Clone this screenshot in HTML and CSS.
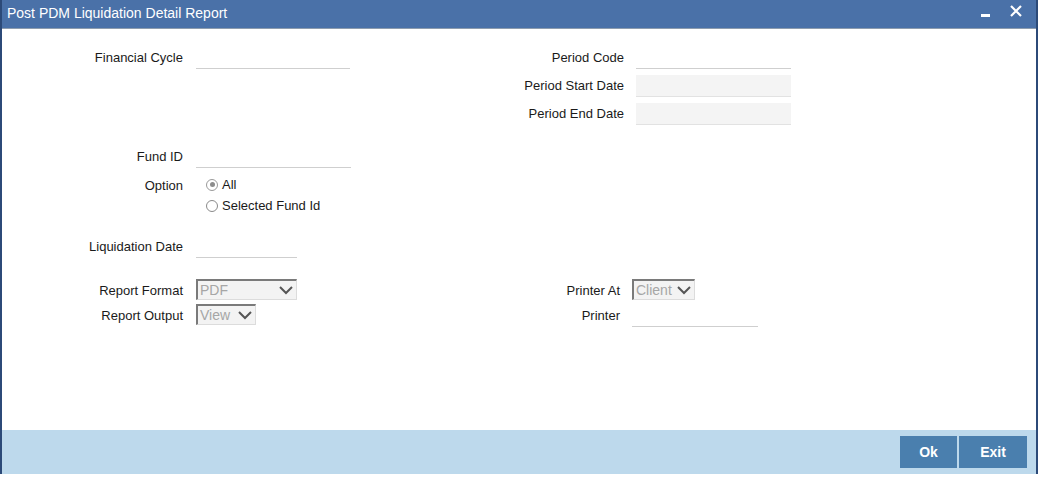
FILE: index.html
```html
<!DOCTYPE html>
<html>
<head>
<meta charset="utf-8">
<title>Post PDM Liquidation Detail Report</title>
<link rel="stylesheet" href="styles.css">
</head>
<body>
<div class="window">
  <div class="titlebar">
    <span class="title">Post PDM Liquidation Detail Report</span>
    <div class="win-ctrls">
      <span class="minimize"></span>
      <svg class="close" width="12" height="12" viewBox="0 0 12 12"><path d="M1 1 L11 11 M11 1 L1 11" stroke="#fff" stroke-width="2.2" fill="none"/></svg>
    </div>
  </div>
  <div class="content">
    <div class="section top">
      <div class="col-left">
        <div class="row"><label class="lbl">Financial Cycle</label><div class="field line w155"></div></div>
      </div>
      <div class="col-right">
        <div class="row"><label class="lbl rlbl">Period Code</label><div class="field line w155"></div></div>
        <div class="row"><label class="lbl rlbl">Period Start Date</label><div class="field filled w155"></div></div>
        <div class="row"><label class="lbl rlbl">Period End Date</label><div class="field filled w155"></div></div>
      </div>
    </div>

    <div class="section mid">
      <div class="row"><label class="lbl">Fund ID</label><div class="field line w155"></div></div>
      <div class="row option-row">
        <label class="lbl">Option</label>
        <div class="radios">
          <div class="radio-item"><span class="radio checked"></span><span>All</span></div>
          <div class="radio-item"><span class="radio"></span><span>Selected Fund Id</span></div>
        </div>
      </div>
      <div class="row liq"><label class="lbl">Liquidation Date</label><div class="field line w101"></div></div>
    </div>

    <div class="section bottom">
      <div class="col-left">
        <div class="row srow"><label class="lbl">Report Format</label>
          <div class="select w101"><span>PDF</span><svg width="14" height="9" viewBox="0 0 14 9"><path d="M1 1 L7 7 L13 1" stroke="#555" stroke-width="2" fill="none"/></svg></div>
        </div>
        <div class="row srow2"><label class="lbl">Report Output</label>
          <div class="select w60"><span>View</span><svg width="14" height="9" viewBox="0 0 14 9"><path d="M1 1 L7 7 L13 1" stroke="#555" stroke-width="2" fill="none"/></svg></div>
        </div>
      </div>
      <div class="col-right2">
        <div class="row srow"><label class="lbl plbl">Printer At</label>
          <div class="select w63"><span>Client</span><svg width="14" height="9" viewBox="0 0 14 9"><path d="M1 1 L7 7 L13 1" stroke="#555" stroke-width="2" fill="none"/></svg></div>
        </div>
        <div class="row prow"><label class="lbl plbl">Printer</label><div class="field line w126"></div></div>
      </div>
    </div>
  </div>
  <div class="footer">
    <button class="btn ok">Ok</button>
    <button class="btn exit">Exit</button>
  </div>
</div>
</body>
</html>
```

FILE: styles.css
```css
html, body {
  margin: 0;
  padding: 0;
  background: #fff;
}
body {
  font-family: "Liberation Sans", Arial, sans-serif;
  font-size: 13px;
  color: #1a1a1a;
}
.window {
  width: 1038px;
  height: 474px;
  box-sizing: border-box;
  border-left: 2px solid #2c4a78;
  border-right: 2px solid #2c4a78;
  display: flex;
  flex-direction: column;
}
.titlebar {
  height: 28px;
  background: #4a71a8;
  border-bottom: 1px solid #8d9cae;
  display: flex;
  align-items: center;
  justify-content: space-between;
  padding-left: 5px;
  padding-right: 14px;
  flex: none;
}
.title {
  color: #fff;
  font-size: 14px;
  line-height: 1;
  padding-bottom: 3px;
}
.win-ctrls {
  display: flex;
  align-items: center;
  gap: 20px;
  padding-bottom: 6px;
}
.minimize {
  display: block;
  width: 9px;
  height: 3px;
  background: #fff;
  margin-top: 9px;
}
.content {
  flex: 1;
  background: #fff;
  position: relative;
}
.section {
  display: flex;
}
.top {
  margin-top: 18px;
}
.col-left {
  width: 348px;
  display: flex;
  flex-direction: column;
  gap: 6px;
}
.col-right {
  display: flex;
  flex-direction: column;
  gap: 6px;
}
.row {
  display: flex;
  align-items: center;
  height: 22px;
}
.lbl {
  width: 181px;
  text-align: right;
  margin-right: 13px;
  padding-bottom: 2px;
  flex: none;
}
.rlbl {
  width: 274px;
  margin-right: 12px;
}
.field {
  height: 22px;
  box-sizing: border-box;
  border-bottom: 1px solid #cfcfcf;
}
.filled {
  background: #f4f4f4;
  border-bottom: 1px solid #e2e2e2;
}
.w155 { width: 155px; }
.w101 { width: 101px; }
.w126 { width: 126px; }
.mid {
  flex-direction: column;
  margin-top: 21px;
}
.option-row {
  height: auto;
  align-items: flex-start;
  margin-top: 7px;
}
.option-row .lbl {
  line-height: 21px;
}
.radios {
  display: flex;
  flex-direction: column;
  margin-left: 10px;
}
.radio-item {
  display: flex;
  align-items: center;
  height: 21px;
  gap: 4px;
  padding-bottom: 2px;
  box-sizing: border-box;
}
.radio {
  display: inline-block;
  width: 12px;
  height: 12px;
  border: 1px solid #8a8a8a;
  border-radius: 50%;
  box-sizing: border-box;
  background: #fff;
  position: relative;
}
.radio.checked {
  border-color: #9a9a9a;
}
.radio.checked::after {
  content: "";
  position: absolute;
  left: 2.5px;
  top: 2.5px;
  width: 5px;
  height: 5px;
  border-radius: 50%;
  background: #8c8c8c;
}
.liq {
  margin-top: 19px;
}
.bottom {
  margin-top: 21px;
}
.col-left .srow2 {
  margin-top: -2px;
}
.srow { height: 21px; }
.srow2 { height: 21px; }
.srow .lbl, .srow2 .lbl {
  padding-bottom: 0;
  padding-top: 2px;
}
.select {
  height: 21px;
  box-sizing: border-box;
  border-top: 2px solid #7a7a7a;
  border-left: 2px solid #7a7a7a;
  border-right: 1px solid #dcdcdc;
  border-bottom: 1px solid #dcdcdc;
  background: #f3f3f3;
  color: #a6a6a6;
  font-size: 14px;
  display: flex;
  align-items: center;
  justify-content: space-between;
  padding: 0 3px 0 2px;
}
.w60 { width: 60px; }
.w63 { width: 63px; }
.col-right2 {
  display: flex;
  flex-direction: column;
  gap: 5px;
}
.plbl {
  width: 270px;
  margin-right: 12px;
}
.prow {
  height: 22px;
}
.footer {
  height: 44px;
  background: #bdd9ec;
  flex: none;
  display: flex;
  justify-content: flex-end;
  align-items: center;
  gap: 2px;
  padding-right: 9px;
}
.btn {
  height: 32px;
  border: none;
  background: #4a7fae;
  color: #fff;
  font-family: "Liberation Sans", Arial, sans-serif;
  font-size: 14px;
  font-weight: bold;
  padding: 0;
}
.ok { width: 57px; }
.exit { width: 68px; }
```
